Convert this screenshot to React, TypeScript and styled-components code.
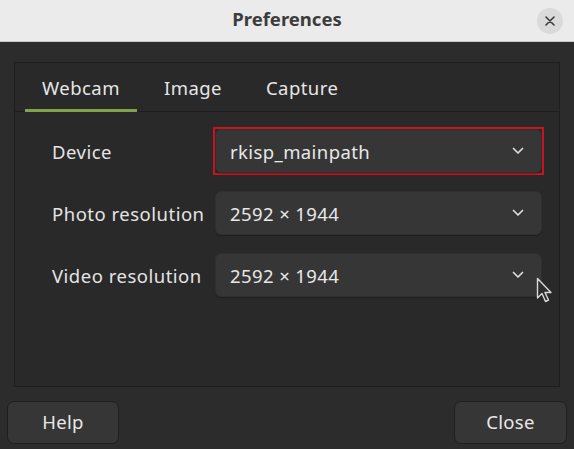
import React from "react";
import styled, { createGlobalStyle } from "styled-components";

const Global = createGlobalStyle`
  html, body { margin: 0; padding: 0; background: #2c2c2c; }
  body { font-family: "Noto Sans", "DejaVu Sans", sans-serif; }
  * { box-sizing: border-box; }
`;

const Window = styled.div`
  position: relative;
  width: 574px;
  height: 449px;
  background: #2c2c2c;
  display: flex;
  flex-direction: column;
  overflow: hidden;
`;

const TitleBar = styled.div`
  height: 42px;
  flex: none;
  background: #ebebeb;
  border-bottom: 1px solid #c9c9c9;
  display: flex;
  align-items: center;
  justify-content: center;
  position: relative;
`;

const Title = styled.div`
  font-size: 18.5px;
  font-weight: 700;
  color: #3c3c3c;
  margin-top: -4px;
`;

const CloseCircle = styled.button`
  position: absolute;
  right: 11px;
  top: 8px;
  width: 26px;
  height: 26px;
  border-radius: 50%;
  border: none;
  padding: 0;
  background: #dadada;
  display: flex;
  align-items: center;
  justify-content: center;
`;

const Body = styled.div`
  flex: 1;
  display: flex;
  flex-direction: column;
  padding: 20px 7px 6px;
`;

const Frame = styled.div`
  margin: 0 7px;
  height: 325px;
  border: 1px solid #1e1e1e;
  background: #292929;
  display: flex;
  flex-direction: column;
`;

const TabHeader = styled.div`
  height: 49px;
  flex: none;
  display: flex;
  align-items: stretch;
  padding-left: 10px;
  gap: 10px;
  border-bottom: 1px solid #1e1e1e;
`;

const Tab = styled.div<{ $active?: boolean }>`
  padding: 0 17px;
  display: flex;
  align-items: center;
  justify-content: center;
  font-size: 18.5px;
  letter-spacing: 0.45px;
  color: #e6e6e6;
  padding-bottom: 1px;
  box-shadow: ${(p) => (p.$active ? "inset 0 -3px 0 #7fa24a" : "none")};
  margin-bottom: -1px;
`;

const Page = styled.div`
  padding: 17px 17px 0 37px;
  display: grid;
  grid-template-columns: 163px 1fr;
  grid-auto-rows: 44px;
  row-gap: 18px;
  align-items: center;
`;

const Label = styled.div`
  font-size: 18.5px;
  letter-spacing: 0.5px;
  color: #e4e4e4;
  white-space: nowrap;
`;

const FocusRing = styled.div`
  margin: -2px;
  border: 2px solid #c8141e;
`;

const Combo = styled.div`
  height: 44px;
  border-radius: 6px;
  background: #363636;
  border: 1px solid #2f2f2f;
  box-shadow: 0 1px 1px rgba(0, 0, 0, 0.25);
  display: flex;
  align-items: center;
  justify-content: space-between;
  padding: 0 17px 0 14px;
  font-size: 18.5px;
  letter-spacing: 0.4px;
  color: #e8e8e8;
`;

const ActionBar = styled.div`
  margin-top: 14px;
  display: flex;
  justify-content: space-between;
`;

const Button = styled.button<{ $w: number }>`
  width: ${(p) => p.$w}px;
  height: 43px;
  border-radius: 7px;
  border: 1px solid #1f1f1f;
  background: #363636;
  color: #e8e8e8;
  font-family: "Noto Sans", "DejaVu Sans", sans-serif;
  font-size: 18.5px;
  letter-spacing: 0.3px;
  padding: 0 0 2px;
`;

const Cursor = styled.svg`
  position: absolute;
  left: 536px;
  top: 277px;
`;

const Chevron = () => (
  <svg width="12" height="8" viewBox="0 0 12 8">
    <path d="M1.5 1.5 L6 6 L10.5 1.5" fill="none" stroke="#dcdcdc" strokeWidth="1.7" strokeLinecap="round" strokeLinejoin="round" />
  </svg>
);

export default function App() {
  return (
    <Window>
      <Global />
      <TitleBar>
        <Title>Preferences</Title>
        <CloseCircle aria-label="close">
          <svg width="10" height="10" viewBox="0 0 10 10">
            <path d="M1 1 L9 9 M9 1 L1 9" stroke="#3a3a3a" strokeWidth="1.6" strokeLinecap="round" />
          </svg>
        </CloseCircle>
      </TitleBar>
      <Body>
        <Frame>
          <TabHeader>
            <Tab $active>Webcam</Tab>
            <Tab>Image</Tab>
            <Tab>Capture</Tab>
          </TabHeader>
          <Page>
            <Label>Device</Label>
            <FocusRing>
              <Combo>
                <span>rkisp_mainpath</span>
                <Chevron />
              </Combo>
            </FocusRing>
            <Label>Photo resolution</Label>
            <Combo>
              <span>2592 × 1944</span>
              <Chevron />
            </Combo>
            <Label>Video resolution</Label>
            <Combo>
              <span>2592 × 1944</span>
              <Chevron />
            </Combo>
          </Page>
        </Frame>
        <ActionBar>
          <Button $w={112}>Help</Button>
          <Button $w={113}>Close</Button>
        </ActionBar>
      </Body>
      <Cursor width="18" height="28" viewBox="0 0 18 28">
        <path d="M1.5 1.5 L1.5 21 L6 16.5 L9.5 24.5 L12.5 23 L9 15.5 L15 15.5 Z" fill="#2e2e2e" stroke="#d8d8d8" strokeWidth="1.4" strokeLinejoin="round" />
      </Cursor>
    </Window>
  );
}
